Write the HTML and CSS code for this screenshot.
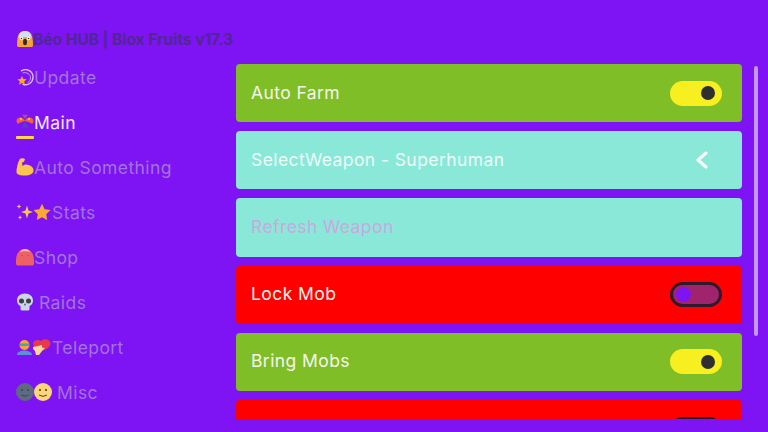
FILE: index.html
```html
<!DOCTYPE html>
<html lang="en">
<head>
<meta charset="utf-8">
<title>Béo HUB</title>
<link rel="stylesheet" href="styles.css">
</head>
<body>
<div class="app">
  <header class="title">
    <svg class="ico" viewBox="0 0 18 18"><path d="M1 15.500C1 5 3 1 9 1s8 4 8 14.500c0 1.500-1 1.500-2.500 1.500h-11C2 17 1 17 1 15.500z" fill="#f7a23b"/><path d="M2.500 8C3 3 5 1 9 1s6 2 6.500 7c-2-1.500-11-1.500-13 0z" fill="#cfe0ee"/><ellipse cx="9" cy="12" rx="2" ry="3.200" fill="#3a2a22"/><circle cx="5.500" cy="8.500" r="1.700" fill="#fff"/><circle cx="12.500" cy="8.500" r="1.700" fill="#fff"/><circle cx="5.500" cy="8.500" r=".8" fill="#333"/><circle cx="12.500" cy="8.500" r=".8" fill="#333"/></svg><span>Béo HUB | Blox Fruits v17.3</span>
  </header>
  <div class="body">
    <nav class="side">
      <div class="tab">
        <svg class="ico" viewBox="0 0 18 18"><path d="M5.500 2.800A7.500 7.500 0 0 1 17 9.500a7.500 7.500 0 0 1-10 6.800" fill="none" stroke="#e6c3ee" stroke-width="1.300" stroke-linecap="round"/><path d="M7 4.800c4-1 7.500 1.500 7.500 5.200 0 2-1 3.500-2.500 4.500" fill="none" stroke="#d9a8e8" stroke-width=".9" stroke-linecap="round"/><path d="M6 8l1.400 3 3.200.3-2.400 2.200.7 3.200L6 15.100 3.100 16.700l.7-3.200-2.400-2.200 3.200-.3z" fill="#f9a825"/></svg><span>Update</span>
      </div>
      <div class="tab tab-on">
        <div class="tab-row">
          <svg class="ico" viewBox="0 0 18 18"><path d="M9 7C8 3 1 2 .500 7c0 1 .5 2 1.500 3 2-2 4-2 7-3z" fill="#f4623a"/><path d="M9 7c1-4 8-5 8.500 0 0 1-.5 2-1.500 3-2-2-4-2-7-3z" fill="#f4623a"/><path d="M6 .800h6L9 5z" fill="#a8508a"/><path d="M9 7l-4 9 4-3 4 3z" fill="#5b3fc0"/><circle cx="5" cy="5" r="1" fill="#ffd25a"/><circle cx="13" cy="5" r="1" fill="#ffd25a"/></svg><span>Main</span>
        </div>
        <div class="underline"></div>
      </div>
      <div class="tab">
        <svg class="ico" viewBox="0 0 18 18"><path d="M4 .8C6-.2 8.500.3 9 1.500L7.800 4 6 4.500 6.500 8C8 6.500 10 6 12.500 7c3 1 5 2.500 5 5.500 0 3.500-4 5-8 5-4.500 0-8.500-.5-9-3C.500 10 2 4 4 .8z" fill="#fbc44f"/></svg><span>Auto Something</span>
      </div>
      <div class="tab">
        <svg class="ico ico-wide" viewBox="0 0 36 18"><path d="M11 2.500l1.500 5 4.500 1.500-4.500 1.500-1.500 5-1.500-5L5 9l4.500-1.500z" fill="#fbc44f"/><path d="M3 1l.6 1.800L5.300 3.500l-1.700.7L3 6l-.6-1.800L.7 3.500l1.700-.7z" fill="#f5c75c"/><path d="M4 12l.6 1.700 1.700.6-1.700.6L4 17l-.6-2.100-1.700-.6 1.700-.6z" fill="#f5c75c"/><path d="M26 .8l2.600 5.400 5.900.8-4.300 4.200 1 5.900-5.200-2.800-5.200 2.800 1-5.900L17.500 7l5.900-.8z" fill="#fba834"/></svg><span>Stats</span>
      </div>
      <div class="tab">
        <svg class="ico" viewBox="0 0 18 18"><path d="M0 13C0 6 3 1 9 1s9 5 9 12v2.500c0 1.500-1 2-2 2H2c-1 0-2-.5-2-2z" fill="#ec6066"/><path d="M4 4.200C5 2 7 1 9 1s4 1 5 3.200C12 2.800 6 2.800 4 4.200z" fill="#f6bf9e"/><circle cx="6" cy="7.500" r=".6" fill="#b23a48"/><circle cx="12" cy="7.500" r=".6" fill="#b23a48"/></svg><span>Shop</span>
      </div>
      <div class="tab">
        <svg class="ico" viewBox="0 0 18 18"><path d="M9 .5c5 0 8 3 8 7 0 3-1.500 4.500-3.500 5.500V16c0 1-1 1.500-2 1.500H6.500c-1 0-2-.5-2-1.500v-3C2.500 12 1 10.500 1 7.500c0-4 3-7 8-7z" fill="#ccd6e6"/><circle cx="5.500" cy="8" r="2.500" fill="#3b3f47"/><circle cx="12.500" cy="8" r="2.500" fill="#3b3f47"/><path d="M9 10l1 2.300H8z" fill="#3b3f47"/></svg><span class="lead">Raids</span>
      </div>
      <div class="tab">
        <svg class="ico ico-wide" viewBox="0 0 36 18"><path d="M1 17c0-3 3-4.500 7-4.500s8 1.500 8 4.500z" fill="#5b8fd6"/><circle cx="8.500" cy="7" r="5" fill="#f7a23b"/><rect x="4" y="5.500" width="9" height="2.500" fill="#4aa59a"/><path d="M17 5c1-3 5-4 8-2 3-3 9-2 9.500 2.500 0 3-3 5-7 7L25 11l-4 .5-3-2z" fill="#e5394c"/><path d="M17 9l5-1 4-1v2.500l3 .5-3 3-3 4h-3l-1-4-2-2z" fill="#fbd79e"/></svg><span>Teleport</span>
      </div>
      <div class="tab">
        <svg class="ico ico-wide" viewBox="0 0 36 18"><circle cx="9" cy="9" r="9" fill="#5d6a80"/><circle cx="27" cy="9" r="9" fill="#fbd67a"/><circle cx="6" cy="7" r="1" fill="#3c4553"/><circle cx="12" cy="7" r="1" fill="#3c4553"/><path d="M5.500 12q3.500 2.500 7 0" fill="none" stroke="#3c4553"/><circle cx="24" cy="7" r="1.100" fill="#5b3f22"/><circle cx="30" cy="7" r="1.100" fill="#5b3f22"/><path d="M23 12q4 2.800 8 0" fill="none" stroke="#5b3f22"/></svg><span class="lead">Misc</span>
      </div>
    </nav>
    <main class="list">
      <div class="card green"><span>Auto Farm</span><div class="sw sw-on"><i class="knob"></i></div></div>
      <div class="card teal"><span>SelectWeapon - Superhuman</span><svg class="chev" viewBox="0 0 14 18"><path d="M11 2L3 9l8 7" fill="none" stroke="#fff" stroke-width="3" stroke-linecap="round" stroke-linejoin="round"/></svg></div>
      <div class="card teal"><span class="faded">Refresh Weapon</span></div>
      <div class="card red"><span>Lock Mob</span><div class="sw sw-off"><i class="knob"></i></div></div>
      <div class="card green"><span>Bring Mobs</span><div class="sw sw-on"><i class="knob"></i></div></div>
      <div class="card red card-end"><div class="sw sw-off"><i class="knob"></i></div></div>
    </main>
    <div class="track"><div class="thumb"></div></div>
  </div>
</div>
</body>
</html>
```
FILE: styles.css
```css
* { box-sizing: border-box; }
html, body { margin: 0; height: 100%; }
body { background: #7e13f4; overflow: hidden; font-family: "Inter", "Lato", sans-serif; }
.app { width: 768px; height: 432px; display: flex; flex-direction: column; padding: 30px 10px 13px 16px; }
.title { height: 18px; display: flex; align-items: center; font-size: 15.500px; font-weight: 700; color: #50288f; flex: none; }
.title span { margin-left: -1px; }
.body { flex: 1; min-height: 0; display: flex; margin-top: 16px; }
.side { width: 220px; flex: none; display: flex; flex-direction: column; gap: 25px; padding-top: 3px; }
.tab { height: 20px; display: flex; align-items: center; font-size: 17.500px; letter-spacing: .42px; color: #a274d9; }
.tab-on { display: block; color: #f2e6fb; }
.tab-row { height: 20px; display: flex; align-items: center; padding-top: 1px; }
.underline { width: 18px; height: 3px; background: #fdd24e; border-radius: 1px; margin-top: 4px; }
.ico { width: 18px; height: 18px; flex: none; display: block; }
.ico-wide { width: 36px; }
.lead { margin-left: 5px; }
.list { width: 506px; flex: none; overflow: hidden; display: flex; flex-direction: column; gap: 9px; }
.card { height: 58.200px; flex: none; border-radius: 4px; display: flex; align-items: center; justify-content: space-between; padding: 0 20px 2px 15px; font-size: 17.500px; letter-spacing: .42px; color: #f6f6ec; }
.card-end { justify-content: flex-end; }
.green { background: #7fbe27; }
.teal { background: #8ae8d8; color: #eefbf7; }
.red { background: #ff0000; }
.faded { color: #cba8e0; }
.sw { width: 52px; height: 25px; border-radius: 13px; display: flex; align-items: center; padding: 0 7px; margin-top: 2px; }
.sw-on { background: #f7ef1f; justify-content: flex-end; }
.sw-off { background: #a0246c; border: 3px solid #2e1a2c; justify-content: flex-start; padding: 0 3px; }
.knob { width: 14px; height: 14px; border-radius: 50%; background: #2f2f2f; display: block; }
.sw-off .knob { background: #7e13f4; width: 15px; height: 15px; }
.chev { width: 14px; height: 18px; margin-right: 13px; margin-top: 2px; }
.track { width: 4px; margin-left: 12px; flex: none; }
.thumb { width: 4px; height: 270px; margin-top: 2px; background: #c596f6; border-radius: 2px; }
```
